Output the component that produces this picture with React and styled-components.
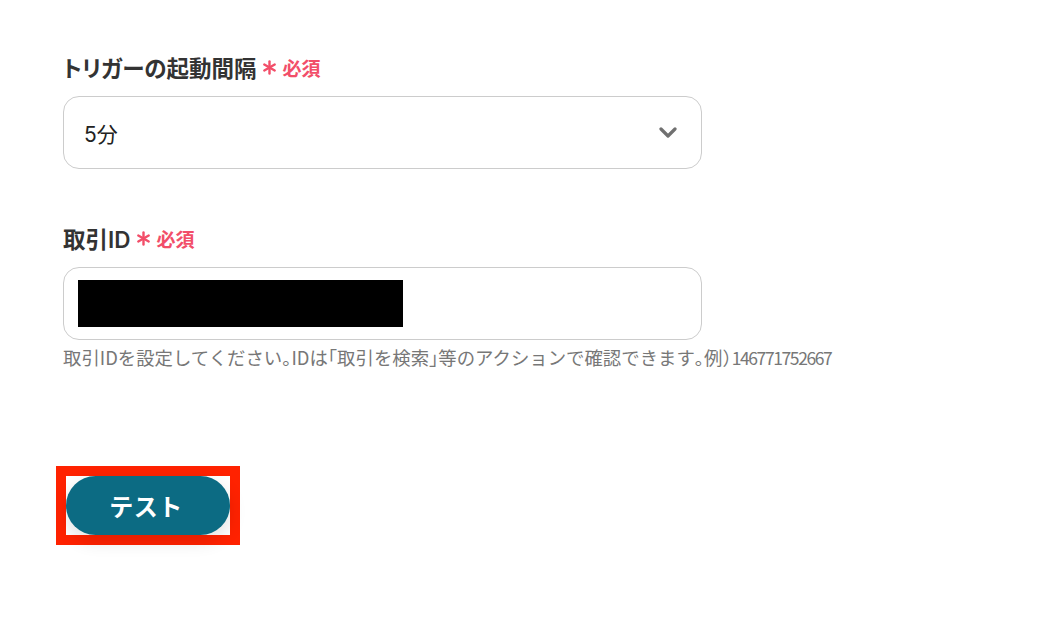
import React from "react";
import styled, { createGlobalStyle } from "styled-components";

const GlobalStyle = createGlobalStyle`
  body {
    margin: 0;
    background: #fff;
    font-family: "Inter", "Noto Sans CJK JP", sans-serif;
    color: #333;
  }
`;

const Page = styled.div`
  width: 1064px;
  height: 636px;
  padding: 52px 0 0 63px;
  box-sizing: border-box;
  display: flex;
  flex-direction: column;
`;

const Field = styled.div`
  display: flex;
  flex-direction: column;
  width: 639px;
  margin-bottom: ${({ gap }) => gap || 0}px;
`;

const Label = styled.div`
  display: flex;
  align-items: center;
  height: 30px;
  font-size: 22.5px;
  font-weight: 600;
  font-feature-settings: "palt";
  color: #333;
  margin-bottom: 14px;
`;

const Required = styled.span`
  display: inline-flex;
  align-items: center;
  margin-left: 6px;
  gap: 5px;
  color: #f24e69;
  font-size: 19px;
  font-weight: 600;
`;

const Box = styled.div`
  height: 73px;
  box-sizing: border-box;
  border: 1px solid #cccccc;
  border-radius: 16px;
  display: flex;
  align-items: center;
  justify-content: space-between;
  padding: 0 24px 0 ${({ pad }) => pad}px;
  font-size: 21px;
  color: #222;
`;

const Masked = styled.div`
  width: 325px;
  height: 47px;
  background: #000;
`;

const Help = styled.div`
  margin-top: 5px;
  font-family: "Noto Sans CJK JP", sans-serif;
  font-size: 18.4px;
  line-height: 24px;
  color: #777;
  white-space: nowrap;
`;

const Punct = styled.span`
  font-feature-settings: "halt";
`;

const Num = styled.span`
  font-size: 17.5px;
  letter-spacing: -1.4px;
`;

const Highlight = styled.div`
  align-self: flex-start;
  margin: 96px 0 0 -7px;
  border: 10px solid #ff2200;
  background: #fff;
  display: flex;
`;

const TestButton = styled.button`
  width: 164px;
  height: 59px;
  border: none;
  border-radius: 30px;
  background: #0c6b83;
  color: #fff;
  font-family: "Noto Sans CJK JP", sans-serif;
  font-size: 24px;
  font-weight: 700;
  letter-spacing: 0.5px;
  padding: 0 4px 0 0;
  box-shadow: 0 6px 18px rgba(0, 0, 0, 0.12);
  cursor: pointer;
`;

const Asterisk = () => (
  <svg width="15" height="15" viewBox="0 0 15 15">
    <g stroke="#f24e69" strokeWidth="2.4" strokeLinecap="round">
      <line x1="7.5" y1="1.5" x2="7.5" y2="13.5" />
      <line x1="2.3" y1="4.5" x2="12.7" y2="10.5" />
      <line x1="2.3" y1="10.5" x2="12.7" y2="4.5" />
    </g>
  </svg>
);

const Chevron = () => (
  <svg width="18" height="12" viewBox="0 0 18 12">
    <polyline
      points="2,2 9,9 16,2"
      fill="none"
      stroke="#707070"
      strokeWidth="3.2"
      strokeLinecap="round"
      strokeLinejoin="round"
    />
  </svg>
);

export default function App() {
  return (
    <>
      <GlobalStyle />
      <Page>
        <Field gap={54}>
          <Label>
            トリガーの起動間隔
            <Required>
              <Asterisk />
              必須
            </Required>
          </Label>
          <Box pad={20}>
            <span>5分</span>
            <Chevron />
          </Box>
        </Field>
        <Field>
          <Label>
            取引ID
            <Required>
              <Asterisk />
              必須
            </Required>
          </Label>
          <Box pad={14}>
            <Masked />
          </Box>
          <Help>
            取引IDを設定してください<Punct>。</Punct>IDは<Punct>「</Punct>取引を検索<Punct>」</Punct>等のアクションで確認できます<Punct>。</Punct>例<Punct>）</Punct>
            <Num>146771752667</Num>
          </Help>
        </Field>
        <Highlight>
          <TestButton>テスト</TestButton>
        </Highlight>
      </Page>
    </>
  );
}
